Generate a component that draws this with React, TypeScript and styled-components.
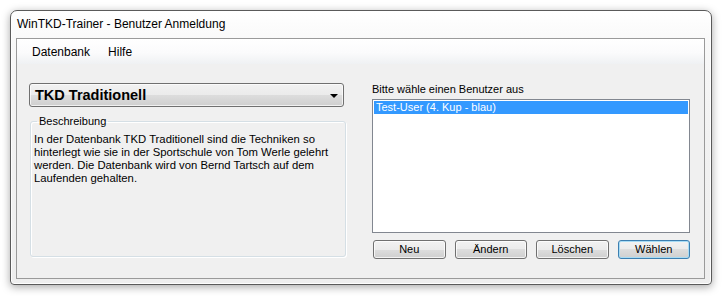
import React from 'react'
import styled, { createGlobalStyle } from 'styled-components'

const Global = createGlobalStyle`
    html, body {
        margin: 0;
        padding: 0;
        background: #ffffff;
    }
    body {
        font-family: "Liberation Sans", Arial, sans-serif;
        color: #000000;
    }
`

const users = ['Test-User (4. Kup - blau)']
const buttons = ['Neu', 'Ändern', 'Löschen', 'Wählen']

const App: React.FC = () => {
    return (
        <>
            <Global />
            <Stage>
                <Window>
                    <TitleBar>WinTKD-Trainer - Benutzer Anmeldung</TitleBar>
                    <Client>
                        <MenuBar>
                            <MenuItem>Datenbank</MenuItem>
                            <MenuItem>Hilfe</MenuItem>
                        </MenuBar>
                        <Body>
                            <Column>
                                <Combo>
                                    <ComboText>TKD Traditionell</ComboText>
                                    <Arrow />
                                </Combo>
                                <Group>
                                    <Legend>Beschreibung</Legend>
                                    <Para>
                                        In der Datenbank TKD Traditionell sind die Techniken so hinterlegt wie sie in der Sportschule von Tom Werle gelehrt werden. Die Datenbank wird von Bernd Tartsch auf dem Laufenden gehalten.
                                    </Para>
                                </Group>
                            </Column>
                            <Column>
                                <Label>Bitte wähle einen Benutzer aus</Label>
                                <ListBox>
                                    {users.map((u, i) => (
                                        <ListItem key={u} selected={i === 0}>{u}</ListItem>
                                    ))}
                                </ListBox>
                                <ButtonRow>
                                    {buttons.map(b => (
                                        <Button key={b} isDefault={b === 'Wählen'}>{b}</Button>
                                    ))}
                                </ButtonRow>
                            </Column>
                        </Body>
                    </Client>
                </Window>
            </Stage>
        </>
    )
}

const Stage = styled.div`
    width: 724px;
    height: 296px;
    padding: 10px 0 0 10px;
    box-sizing: border-box;
`
const Window = styled.div`
    width: 702px;
    height: 275px;
    box-sizing: border-box;
    border: 1px solid #5a5a5a;
    border-radius: 7px 7px 4px 4px;
    background: linear-gradient(to bottom, #ffffff 0%, #f8f8f8 12%, #f2f2f2 45%, #eeeeee 100%);
    box-shadow: 0 2px 9px rgba(0, 0, 0, 0.35), inset 0 0 0 1px rgba(255, 255, 255, 0.85);
    display: flex;
    flex-direction: column;
    padding: 0 5px 5px 5px;
`
const TitleBar = styled.div`
    height: 27px;
    line-height: 27px;
    padding-left: 1px;
    font-size: 12px;
    color: #000000;
    flex: none;
`
const Client = styled.div`
    flex: 1;
    border: 1px solid #9a9a9a;
    background: #f0f0f0;
    display: flex;
    flex-direction: column;
    margin-right: 1px;
`
const MenuBar = styled.div`
    height: 25px;
    display: flex;
    align-items: center;
    padding-left: 6px;
    background: linear-gradient(to bottom, #ffffff 0%, #fbfbfc 55%, #eff1f3 100%);
    flex: none;
`
const MenuItem = styled.div`
    font-size: 12px;
    padding: 0 9px;
    line-height: 20px;
`
const Body = styled.div`
    display: grid;
    grid-template-columns: 317px 318px;
    column-gap: 26px;
    padding: 19px 14px 0 12px;
`
const Column = styled.div`
    display: flex;
    flex-direction: column;
`
const Combo = styled.div`
    width: 315px;
    height: 24px;
    box-sizing: border-box;
    border: 1px solid #707070;
    border-radius: 3px;
    background: linear-gradient(to bottom, #f2f2f2 0%, #ebebeb 50%, #dddddd 50%, #cfcfcf 100%);
    box-shadow: inset 0 0 0 1px rgba(255, 255, 255, 0.7);
    display: flex;
    align-items: center;
    justify-content: space-between;
    padding: 0 5px 0 5px;
`
const ComboText = styled.span`
    font-size: 14.5px;
    font-weight: bold;
    color: #000000;
`
const Arrow = styled.span`
    width: 0;
    height: 0;
    border-left: 4px solid transparent;
    border-right: 4px solid transparent;
    border-top: 4px solid #000000;
    margin-top: 1px;
`
const Group = styled.fieldset`
    margin: 8px 0 0 1px;
    padding: 5px 3px 0 3px;
    height: 142px;
    box-sizing: border-box;
    border: 1px solid #d5dfe5;
    border-radius: 3px;
    box-shadow: inset 1px 1px 0 #ffffff, 1px 1px 0 #ffffff;
    min-width: 0;
`
const Legend = styled.legend`
    font-size: 11px;
    line-height: 13px;
    padding: 0 2px;
    margin-left: 3px;
`
const Para = styled.p`
    margin: 0;
    font-size: 11.3px;
    line-height: 13px;
`
const Label = styled.div`
    font-size: 11px;
    line-height: 13px;
    height: 16px;
`
const ListBox = styled.div`
    height: 134px;
    box-sizing: border-box;
    border: 1px solid #828790;
    background: #ffffff;
    padding: 1px;
`
const ListItem = styled.div<{ selected?: boolean }>`
    height: 13px;
    line-height: 13px;
    font-size: 11px;
    padding-left: 2px;
    background: ${p => (p.selected ? '#3399ff' : 'transparent')};
    color: ${p => (p.selected ? '#ffffff' : '#000000')};
`
const ButtonRow = styled.div`
    display: flex;
    gap: 9px;
    margin-top: 7px;
    padding-left: 1px;
`
const Button = styled.div<{ isDefault?: boolean }>`
    width: 73px;
    height: 19px;
    box-sizing: border-box;
    border: 1px solid ${p => (p.isDefault ? '#3c7fb1' : '#707070')};
    border-radius: 3px;
    background: linear-gradient(to bottom, #f2f2f2 0%, #ebebeb 50%, #dddddd 50%, #cfcfcf 100%);
    box-shadow: inset 0 0 0 1px ${p => (p.isDefault ? '#a8dcf5' : 'rgba(255, 255, 255, 0.75)')};
    font-size: 11px;
    line-height: 17px;
    text-align: center;
    color: #000000;
`

export default App
